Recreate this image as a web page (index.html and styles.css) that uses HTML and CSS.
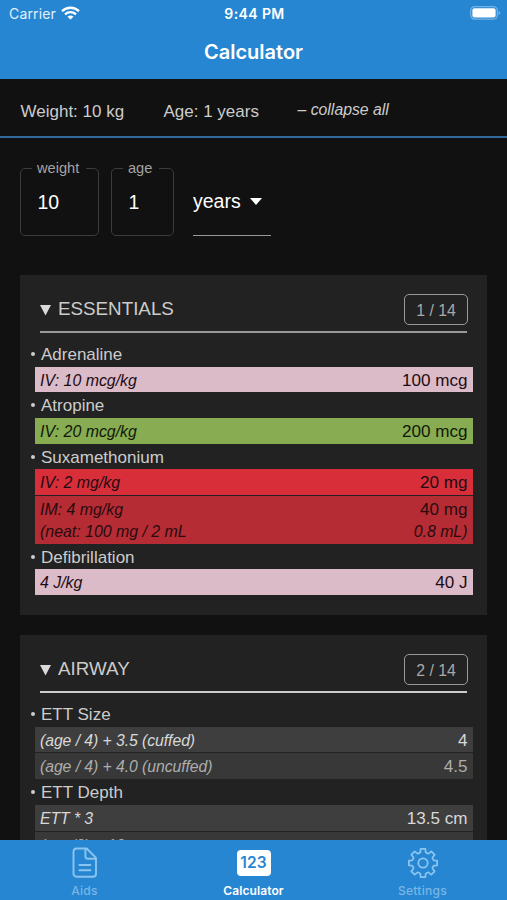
FILE: index.html
```html
<!DOCTYPE html>
<html lang="en">
<head>
<meta charset="utf-8">
<title>Calculator</title>
<link rel="stylesheet" href="styles.css">
</head>
<body>
<div class="app">
  <header class="header">
    <div class="status">
      <div class="carrier"><span>Carrier</span>
        <svg width="19" height="14" viewBox="0 0 19 14" fill="none" stroke="#fff" stroke-width="2.4"><path d="M1 5.2C5.8.6 13.2.6 18 5.2M4 8.3c3.2-2.9 7.8-2.9 11 0"/><path d="M9.5 13.6 6.5 10.7q3-2.5 6 0z" fill="#fff" stroke="none"/></svg>
      </div>
      <div class="time">9:44 PM</div>
      <svg class="battery" width="31" height="15" viewBox="0 0 31 15"><rect x=".7" y=".6" width="26.6" height="12.6" rx="4" fill="none" stroke="#76b4e5" stroke-width="1.2"/><rect x="2.4" y="2.3" width="23.2" height="9.2" rx="2" fill="#fff"/><path d="M28.6 4.8q3.4 2.1 0 4.2z" fill="#76b4e5"/></svg>
    </div>
    <h1 class="title">Calculator</h1>
  </header>

  <div class="summary">
    <span class="summary-weight">Weight: 10 kg</span>
    <span class="summary-age">Age: 1 years</span>
    <span class="collapse">– collapse all</span>
  </div>

  <main class="content">
    <div class="form">
      <fieldset class="field field-weight"><legend>weight</legend><div class="value">10</div></fieldset>
      <fieldset class="field field-age"><legend>age</legend><div class="value">1</div></fieldset>
      <div class="select"><span>years</span><svg width="12" height="7" viewBox="0 0 12 7"><path d="M0 0h12L6 7z" fill="#fff"/></svg></div>
    </div>

    <section class="card">
      <div class="card-head">
        <svg width="11" height="11" viewBox="0 0 11 11"><path d="M0 0h11L5.5 10.5z" fill="#dadada"/></svg>
        <h2>ESSENTIALS</h2><span class="badge">1 / 14</span>
      </div>
      <div class="group">
        <h3>Adrenaline</h3>
        <div class="row pink"><i>IV: 10 mcg/kg</i><b>100 mcg</b></div>
      </div>
      <div class="group">
        <h3>Atropine</h3>
        <div class="row green"><i>IV: 20 mcg/kg</i><b>200 mcg</b></div>
      </div>
      <div class="group">
        <h3>Suxamethonium</h3>
        <div class="row red"><i>IV: 2 mg/kg</i><b>20 mg</b></div>
        <div class="row dark-red"><i>IM: 4 mg/kg</i><b>40 mg</b><i class="note">(neat: 100 mg / 2 mL</i><i class="note end">0.8 mL)</i></div>
      </div>
      <div class="group">
        <h3>Defibrillation</h3>
        <div class="row pink"><i>4 J/kg</i><b>40 J</b></div>
      </div>
    </section>

    <section class="card">
      <div class="card-head thin">
        <svg width="11" height="11" viewBox="0 0 11 11"><path d="M0 0h11L5.5 10.5z" fill="#dadada"/></svg>
        <h2>AIRWAY</h2><span class="badge">2 / 14</span>
      </div>
      <div class="group">
        <h3>ETT Size</h3>
        <div class="row grey"><i class="tight">(age / 4) + 3.5 (cuffed)</i><b>4</b></div>
        <div class="row grey-alt"><i class="tight">(age / 4) + 4.0 (uncuffed)</i><b>4.5</b></div>
      </div>
      <div class="group">
        <h3>ETT Depth</h3>
        <div class="row grey"><i class="tight">ETT * 3</i><b>13.5 cm</b></div>
        <div class="row grey-alt last"><i class="tight">(age/2) + 12</i><b>12.5 cm</b></div>
      </div>
    </section>
  </main>

  <nav class="tabs">
    <div class="tab"><svg width="26" height="32" viewBox="0 0 26 32" fill="none" stroke="#8bc4ef" stroke-width="1.9" stroke-linejoin="round" stroke-linecap="round"><path d="M4.5 1.5h10.2l9.3 9.3v16a3 3 0 0 1-3 3H4.5a3 3 0 0 1-3-3v-22a3.2 3.2 0 0 1 3-3.3zM13.4 1.8v7.4a2.6 2.6 0 0 0 2.6 2.6h7.6M7.4 18h11M7.4 23.2h11"/></svg><span>Aids</span></div>
    <div class="tab active"><div class="digits">123</div><span>Calculator</span></div>
    <div class="tab"><svg width="32" height="32" viewBox="-16 -16 32 32" fill="none" stroke="#8bc4ef" stroke-width="1.8" stroke-linejoin="round"><circle r="4.7"/><path d="M-2.71-10.87-2.36-14.1H2.36L2.71-10.87Q4.3-9 5.77-9.6L8.3-11.64 11.64-8.3 9.6-5.77Q9-4.3 10.87-2.71L14.1-2.36V2.36L10.87 2.71Q9 4.3 9.6 5.77L11.64 8.3 8.3 11.64 5.77 9.6Q4.3 9 2.71 10.87L2.36 14.1H-2.36L-2.71 10.87Q-4.3 9-5.77 9.6L-8.3 11.64-11.64 8.3-9.6 5.77Q-9 4.3-10.87 2.71L-14.1 2.36V-2.36L-10.87-2.71Q-9-4.3-9.6-5.77L-11.64-8.3-8.3-11.64-5.77-9.6Q-4.3-9-2.71-10.87z"/></svg><span>Settings</span></div>
  </nav>
</div>
</body>
</html>
```

FILE: styles.css
```css
* { box-sizing: border-box; }
body { margin: 0; background: #111; font-family: "Liberation Sans", Arial, sans-serif; color: #ccc; }
.app { height: 900px; display: flex; flex-direction: column; overflow: hidden; }
h1, h2, h3 { margin: 0; font-weight: 400; }
svg { display: block; flex: none; }

.header { height: 79px; flex: none; background: #2786d1; color: #fff; font-family: Inter, sans-serif; }
.status { height: 27px; display: grid; grid-template-columns: 1fr auto 1fr; align-items: center; padding: 0 6px 0 9px; font-size: 14px; }
.carrier { display: flex; gap: 6px; align-items: center; color: #e2f1fc; letter-spacing: .15px; }
.carrier svg { margin-left: -1px; margin-top: -1px; }
.time { font-weight: 600; letter-spacing: .4px; margin-right: 1px; }
.battery { justify-self: end; }
.title { height: 50px; line-height: 50px; text-align: center; font-size: 20px; font-weight: 600; }

.summary { height: 59px; flex: none; display: flex; padding: 9px 20px 0 20.5px; align-items: center; font-size: 17px; border-bottom: 2px solid #316a9c; }
.summary-weight { width: 143px; }
.summary-age { width: 134px; }
.collapse { font-style: italic; font-size: 15.8px; padding-bottom: 4px; }

.content { flex: 1; min-height: 0; overflow: hidden; padding: 22px 20px 0; }
.form { display: flex; height: 115px; }
.field { height: 76px; margin: 0; padding: 0 15px; border: 1.5px solid #3c3c3c; border-radius: 5px; min-width: 0; }
.field-weight { width: 79px; margin-right: 12px; }
.field-age { width: 63px; }
.field legend { font-size: 14.6px; line-height: 16px; padding: 0 7px 0 5px; color: #a4a4a4; margin-left: -4px; }
.field .value { color: #fff; font-size: 19.5px; line-height: 22px; padding: 15px 0 0 1.5px; }
.select { width: 78px; height: 76px; margin-left: 19px; border-bottom: 1.5px solid #999; display: flex; gap: 9px; align-items: center; color: #fff; font-size: 19.5px; padding-top: 7px; }

.card { background: #222; height: 340px; margin-bottom: 20px; padding: 18px 14.5px 0 15px; overflow: hidden; }
.card-head { height: 40px; margin: 0 5.5px 8.2px 5px; border-bottom: 2px solid #999; display: flex; align-items: flex-start; }
.card-head svg { margin-top: 12px; }
.card-head.thin { border-bottom-color: #ccc; }
.card h2 { font-size: 18.8px; line-height: 31px; margin-left: 7px; flex: 1; }
.badge { width: 64px; height: 31px; border: 1.5px solid #999; border-radius: 5px; font-size: 15.8px; line-height: 32px; text-align: center; color: #a8a8a8; margin: 1px -1px 0 0; }
.group h3 { font-size: 17px; height: 25.4px; line-height: 27px; padding-left: 6px; position: relative; }
.group h3::before { content: ""; position: absolute; left: -4px; top: 11px; width: 4px; height: 4px; border-radius: 50%; background: #ccc; }
.row { display: grid; grid-template-columns: 1fr auto; grid-template-rows: 24px; height: 25.8px; padding: 1px 5px 0; font-size: 15.9px; line-height: 25.5px; color: #210b12; }
.row b { font-weight: 400; font-size: 17.1px; text-align: right; line-height: 26px; }
.row + .row { border-top: 1px solid #222; height: 27px; }
.row + .dark-red { height: 49px; grid-template-rows: 25px 20px; }
.row .note { line-height: 20px; }
.end { text-align: right; }
.tight { font-size: 15.8px; letter-spacing: -.07px; }
.pink { background: #dcbbc8; }
.green { background: #87ac51; color: #101808; }
.red { background: #d72e3a; }
.dark-red { background: #b62c35; color: #260b0e; }
.grey { background: #3e3e3e; color: #d8d8d8; }
.grey-alt { background: #383838; color: #adadad; }
.last b { line-height: 28px; }

.tabs { height: 60px; flex: none; background: #2786d1; display: grid; grid-template-columns: repeat(3, 1fr); color: #79b6e7; font: 500 12px Inter, sans-serif; }
.tab { display: flex; flex-direction: column; align-items: center; justify-content: space-between; padding: 7px 0 2px; letter-spacing: .3px; }
.active { color: #fff; font-weight: 600; letter-spacing: .1px; }
.digits { width: 34px; height: 26px; margin-top: 3px; border-radius: 4px; background: #fff; color: #2786d1; text-align: center; font-size: 15.5px; font-weight: 600; line-height: 26px; }
```
